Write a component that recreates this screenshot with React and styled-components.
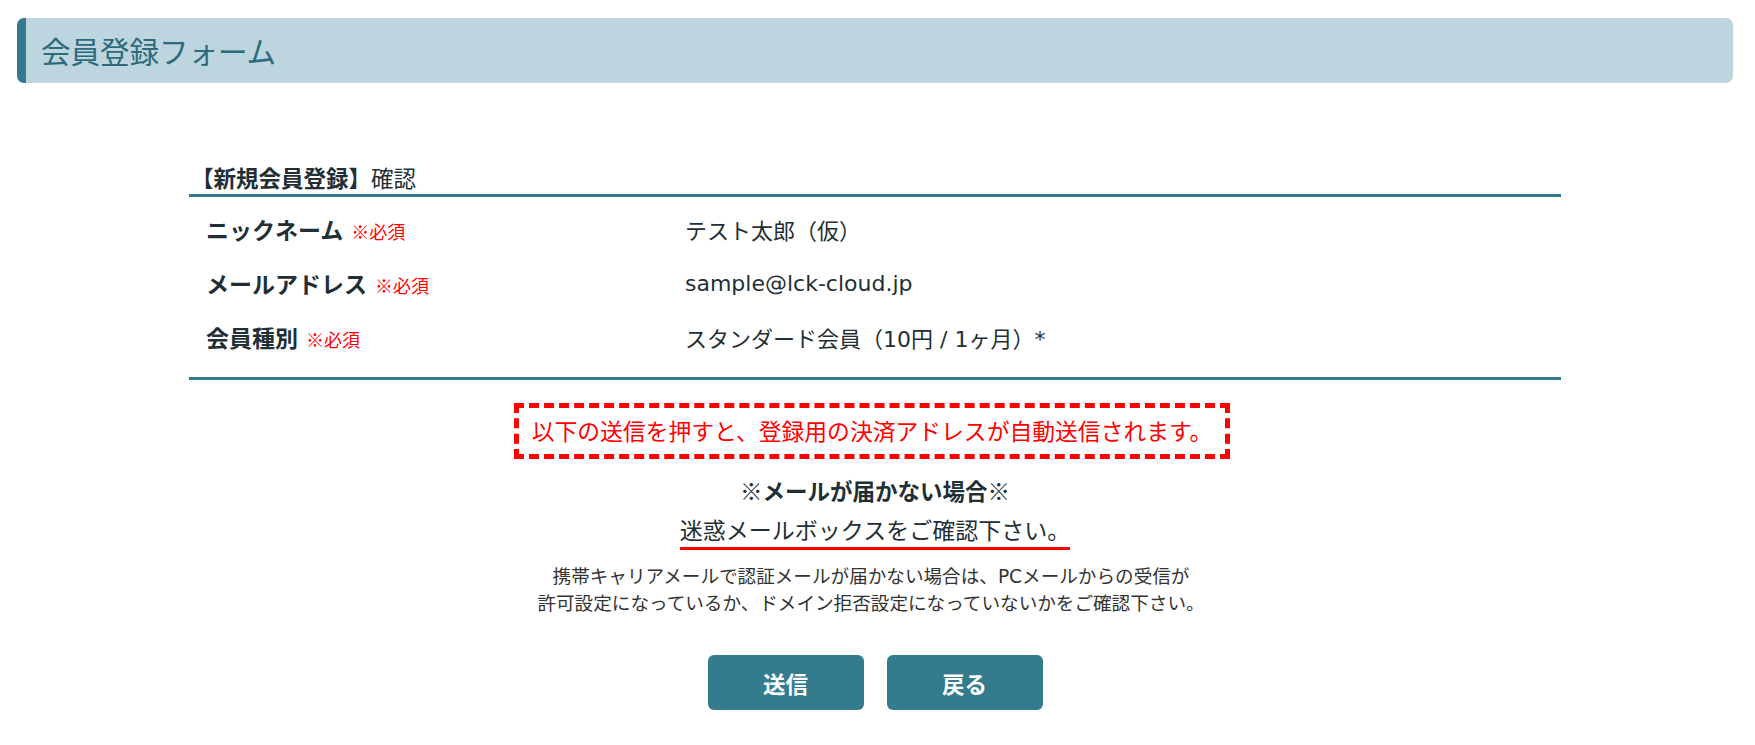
import React from "react";
import styled, { createGlobalStyle } from "styled-components";

const GlobalStyle = createGlobalStyle`
  html, body {
    margin: 0;
    padding: 0;
    background: #ffffff;
  }
  body {
    font-family: "Noto Sans CJK JP", "Noto Sans", sans-serif;
    color: #1f2f35;
  }
  * { box-sizing: border-box; }
`;

const Page = styled.div`
  padding: 18px 22px 0 17px;
`;

const Header = styled.header`
  height: 65px;
  background: #bcd5de;
  border-left: 9px solid #347a8c;
  border-radius: 7px;
  display: flex;
  align-items: center;
  padding-left: 15px;
`;

const Title = styled.h1`
  margin: 0;
  font-size: 29.5px;
  font-weight: 400;
  color: #2d6a7b;
  line-height: 1;
`;

const Main = styled.main`
  width: 1372px;
  margin: 0 0 0 172px;
  display: flex;
  flex-direction: column;
  align-items: center;
`;

const Caption = styled.div`
  align-self: stretch;
  margin-top: 78px;
  line-height: 33px;
  font-size: 22.5px;
  padding-left: 2px;
  color: #1f2f35;
`;

const CaptionStrong = styled.strong`
  font-weight: 700;
`;

const Table = styled.div`
  align-self: stretch;
  border-top: 3px solid #347a8c;
  border-bottom: 3px solid #347a8c;
  padding: 5px 0 13px;
`;

const Row = styled.div`
  display: grid;
  grid-template-columns: 496px 1fr;
  height: 54px;
  align-items: center;
`;

const Label = styled.div`
  padding-left: 17px;
  font-size: 23px;
  font-weight: 700;
  color: #1f2f35;
  display: flex;
  align-items: baseline;
  gap: 8px;
`;

const Required = styled.span`
  font-size: 18px;
  font-weight: 400;
  color: #ff0000;
`;

const Value = styled.div`
  font-family: "DejaVu Sans", "Noto Sans CJK JP", sans-serif;
  font-size: 22px;
  color: #1f2f35;
`;

const Notice = styled.div`
  margin-top: 23px;
  border: 5px dashed #ff0000;
  padding: 6px 13px;
  line-height: 34px;
  font-size: 22.8px;
  color: #ff0000;
  margin-left: -6px;
`;

const SubHeading = styled.div`
  margin-top: 14px;
  font-size: 22.5px;
  font-weight: 700;
  line-height: 34px;
  color: #1f2f35;
`;

const Underlined = styled.div`
  margin-top: 5px;
  font-size: 23px;
  line-height: 34px;
  border-bottom: 3px solid #ff0000;
  padding-bottom: 1px;
  color: #1f2f35;
`;

const Note = styled.p`
  margin: 13px 0 0;
  font-family: "DejaVu Sans", "Noto Sans CJK JP", sans-serif;
  font-size: 18.6px;
  line-height: 27px;
  text-align: center;
  color: #333333;
  margin-left: -8px;
`;

const Buttons = styled.div`
  margin-top: 38px;
  display: flex;
  gap: 23px;
`;

const Button = styled.button`
  width: 156px;
  height: 55px;
  border: none;
  border-radius: 6px;
  background: #347b8d;
  color: #ffffff;
  font-family: "Noto Sans CJK JP", sans-serif;
  font-size: 22.5px;
  font-weight: 700;
  cursor: pointer;
`;

const rows = [
  { label: "ニックネーム", value: "テスト太郎（仮）" },
  { label: "メールアドレス", value: "sample@lck-cloud.jp" },
  { label: "会員種別", value: "スタンダード会員（10円 / 1ヶ月）*" },
];

export default function App() {
  return (
    <>
      <GlobalStyle />
      <Page>
        <Header>
          <Title>会員登録フォーム</Title>
        </Header>
        <Main>
          <Caption>
            <CaptionStrong>【新規会員登録】</CaptionStrong>確認
          </Caption>
          <Table>
            {rows.map((r) => (
              <Row key={r.label}>
                <Label>
                  {r.label}
                  <Required>※必須</Required>
                </Label>
                <Value>{r.value}</Value>
              </Row>
            ))}
          </Table>
          <Notice>以下の送信を押すと、登録用の決済アドレスが自動送信されます。</Notice>
          <SubHeading>※メールが届かない場合※</SubHeading>
          <Underlined>迷惑メールボックスをご確認下さい。</Underlined>
          <Note>
            携帯キャリアメールで認証メールが届かない場合は、PCメールからの受信が
            <br />
            許可設定になっているか、ドメイン拒否設定になっていないかをご確認下さい。
          </Note>
          <Buttons>
            <Button>送信</Button>
            <Button>戻る</Button>
          </Buttons>
        </Main>
      </Page>
    </>
  );
}
